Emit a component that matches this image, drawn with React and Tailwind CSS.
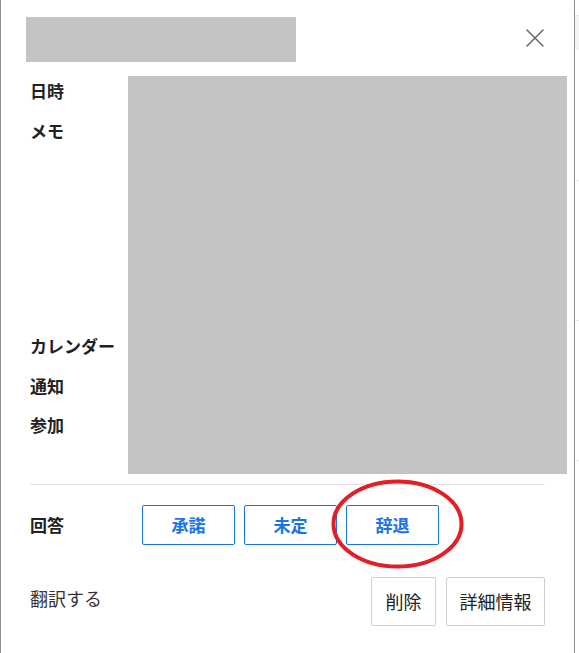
const LABEL = 'h-6 leading-6 text-[17px] font-bold text-[#222]'
const REPLIES = ['承諾', '未定', '辞退']

export default function App() {
  return (
    <div className="relative w-[579px] h-[653px] flex bg-white overflow-hidden"
      style={{ fontFamily: '"Noto Sans CJK JP", "Noto Sans", sans-serif' }}>
      <div className="w-[575px] h-full border-l border-r border-[#8f8f8f] flex flex-col">
        {/* header */}
        <div className="flex items-start mt-[17px] ml-[25px]">
          <div className="w-[270px] h-[45px] bg-[#c4c4c4]" />
          <button className="ml-auto mr-[30px] mt-[12px]">
            <svg width="18" height="18" viewBox="0 0 18 18" stroke="#6b6b6b" strokeWidth="1.6" strokeLinecap="round">
              <path d="M1 1 L17 17 M17 1 L1 17" />
            </svg>
          </button>
        </div>

        {/* body */}
        <div className="flex mt-[14px] ml-[29px]">
          <div className="w-[98px] flex flex-col pt-[3px]">
            <div className={LABEL}>日時</div>
            <div className={`${LABEL} mt-4`}>メモ</div>
            <div className={`${LABEL} mt-[191px]`}>カレンダー</div>
            <div className={`${LABEL} mt-4`}>通知</div>
            <div className={`${LABEL} mt-[15px]`}>参加</div>
          </div>
          <div className="w-[439px] h-[398px] bg-[#c4c4c4]" />
        </div>

        <div className="mt-[10px] ml-[29px] w-[515px] h-px bg-[#e3e3e3]" />

        {/* reply */}
        <div className="flex items-center mt-[20px] ml-[29px] h-[40px]">
          <div className={`${LABEL} w-[112px]`}>回答</div>
          <div className="flex gap-[9px]">
            {REPLIES.map(r => (
              <button key={r}
                className="w-[93px] h-[40px] border border-[#1a73e8] rounded-[2px] text-[#1a73e8] text-[17px] font-bold">
                {r}
              </button>
            ))}
          </div>
        </div>

        {/* footer */}
        <div className="flex mt-[32px] ml-[29px]">
          <div className="mt-[9px] h-6 leading-6 text-[18px] text-[#333]">翻訳する</div>
          <div className="ml-auto mr-[29px] flex gap-[10px]">
            <button className="w-[65px] h-[49px] border border-[#cfcfcf] rounded-[2px] text-[18px] text-[#222]">削除</button>
            <button className="w-[99px] h-[49px] border border-[#cfcfcf] rounded-[2px] text-[18px] text-[#222]">詳細情報</button>
          </div>
        </div>
      </div>

      {/* strip of the page behind the dialog */}
      <div className="flex-1 flex flex-col">
        <div className="mt-[15px] h-[35px] bg-[#f3f3f3] border-t border-[#e6e6e6]" />
        <div className="mt-[130px] h-px bg-[#e6e6e6]" />
        <div className="mt-[139px] h-px bg-[#e6e6e6]" />
        <div className="mt-[139px] h-px bg-[#e6e6e6]" />
      </div>

      {/* red annotation ring */}
      <svg className="absolute left-[331px] top-[479px]" width="133" height="90" viewBox="0 0 133 90">
        <ellipse cx="66.5" cy="45" rx="64" ry="42.5" fill="none" stroke="#e41e25" strokeWidth="4" />
      </svg>
    </div>
  )
}
